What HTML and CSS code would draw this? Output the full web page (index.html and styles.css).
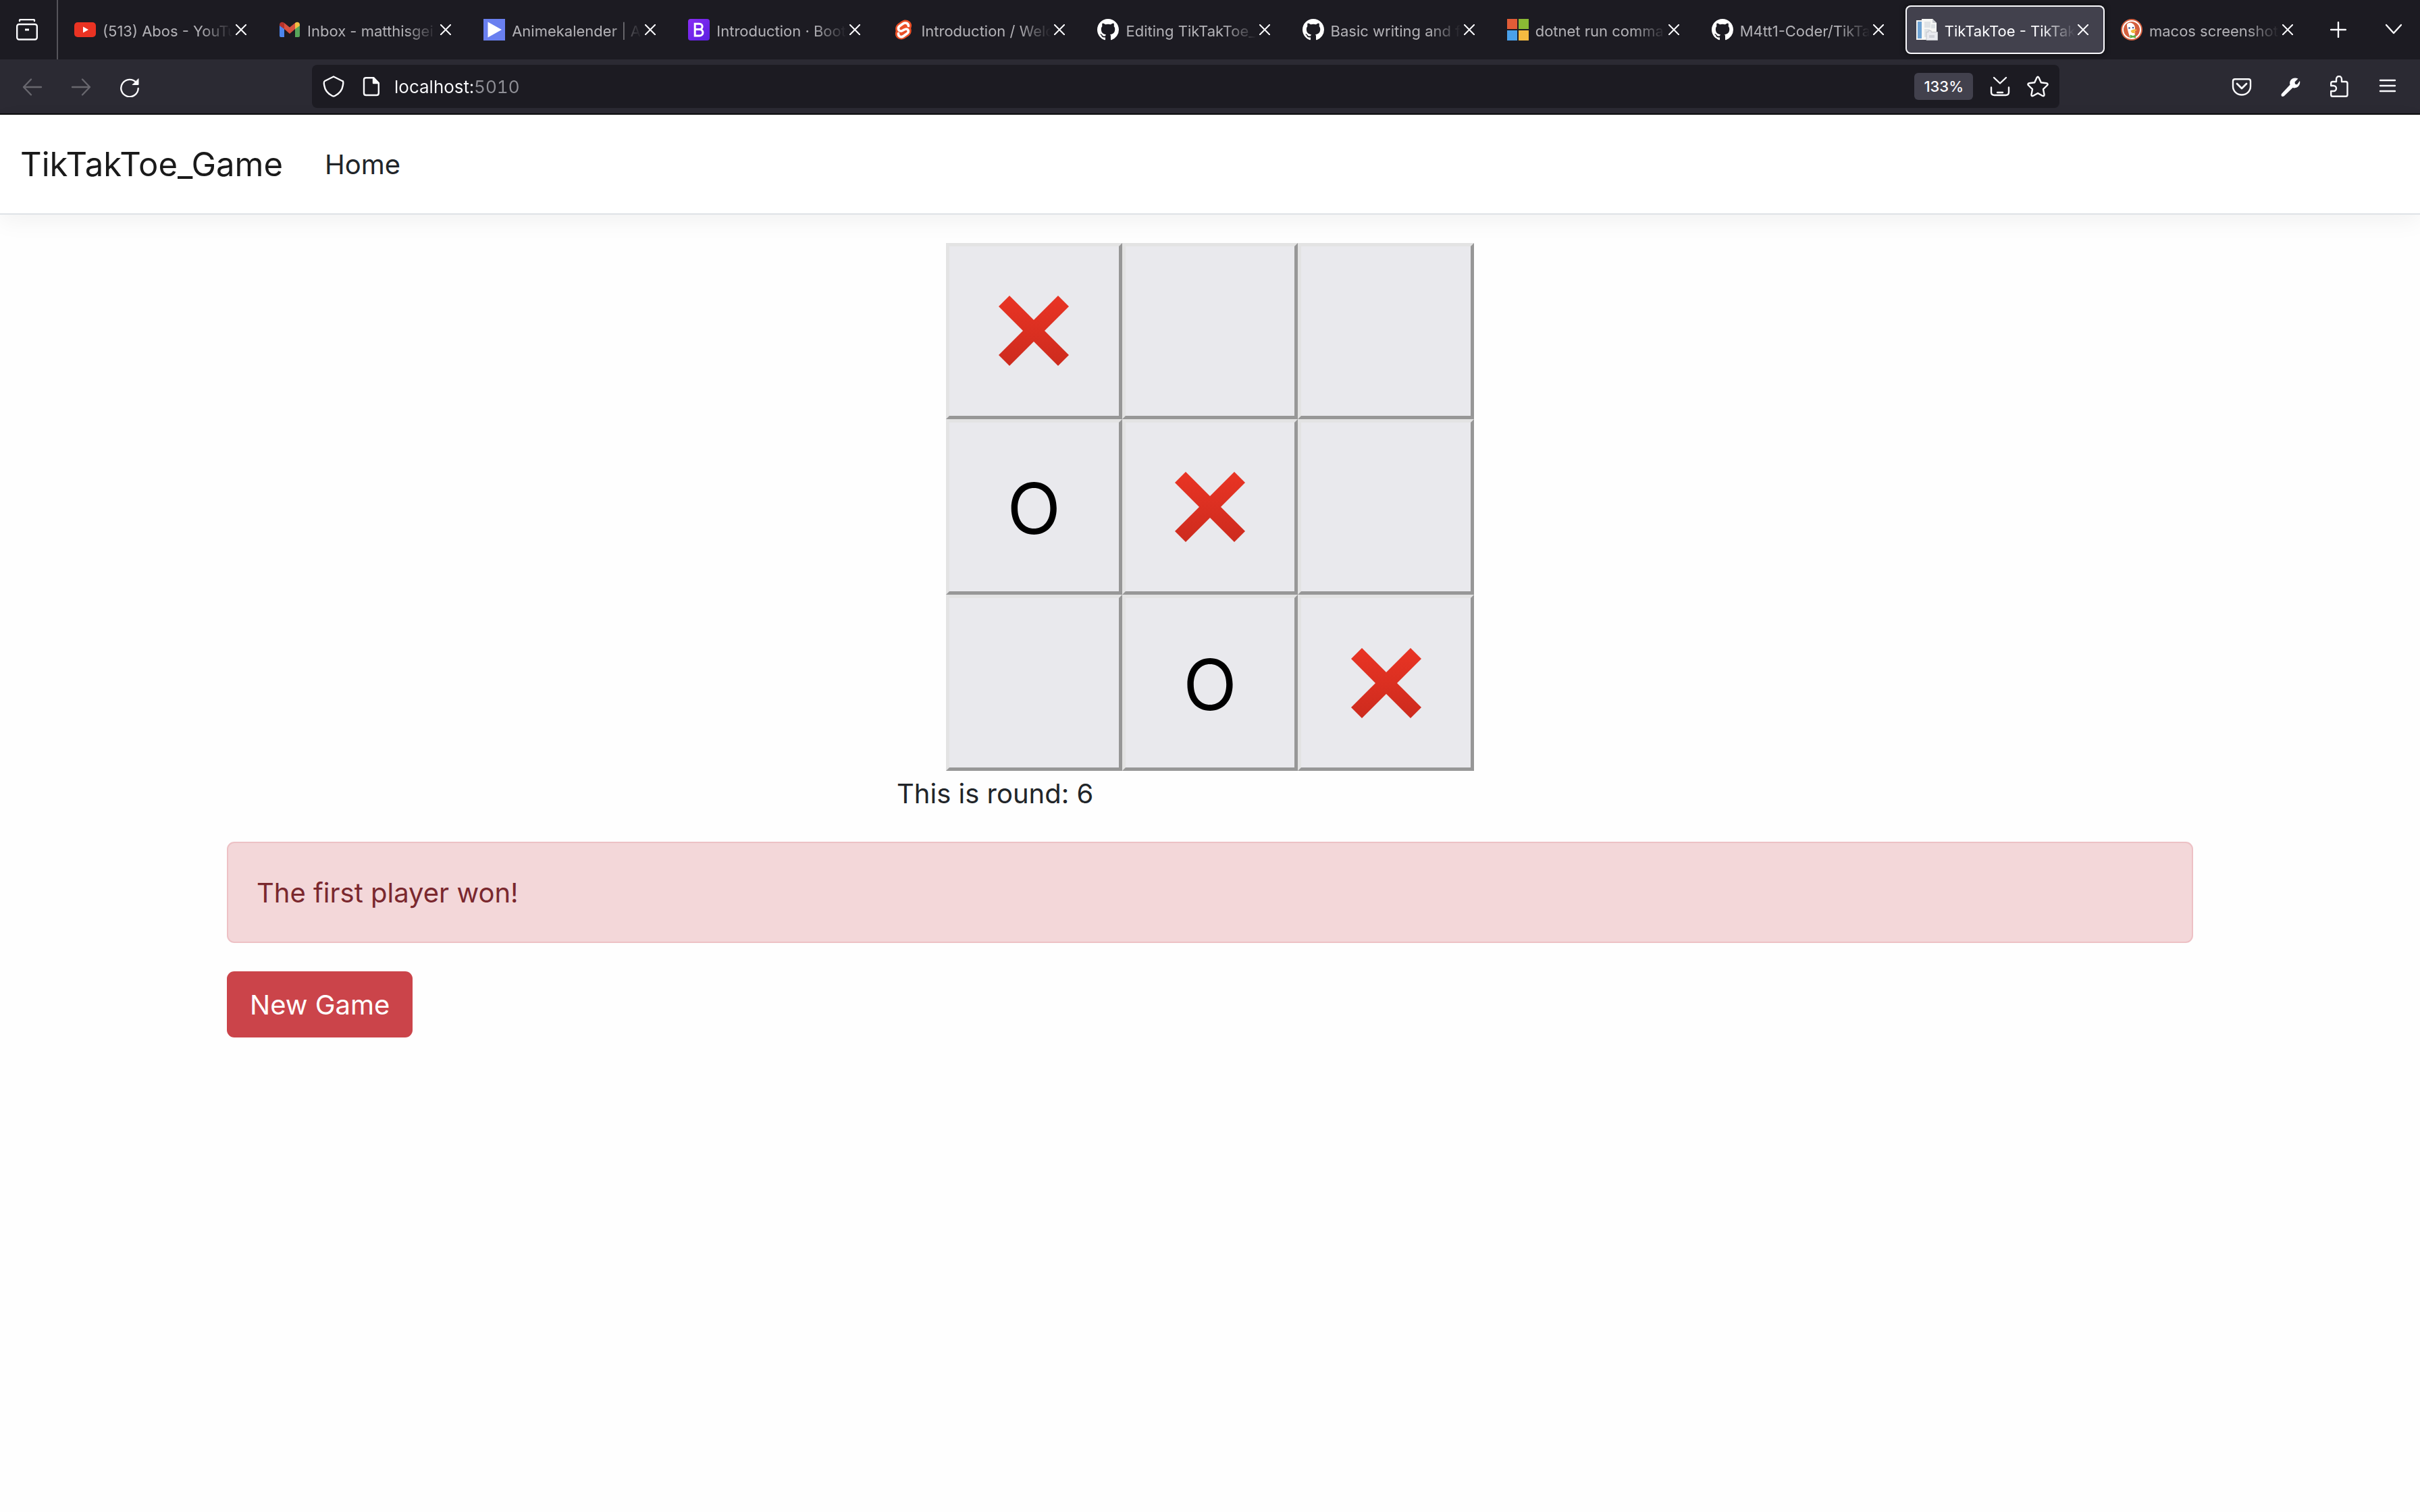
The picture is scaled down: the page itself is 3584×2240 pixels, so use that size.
FILE: index.html
```html
<!DOCTYPE html>
<html lang="en">
<head>
<meta charset="utf-8">
<meta name="viewport" content="width=device-width, initial-scale=1">
<title>TikTakToe - TikTakToe_Game</title>
<link rel="stylesheet" href="styles.css">
</head>
<body>
<svg class="defs" aria-hidden="true">
  <defs>
    <linearGradient id="red" x1="0" y1="0" x2="0" y2="1">
      <stop offset="0" stop-color="#e93424"/>
      <stop offset="1" stop-color="#cd2b1e"/>
    </linearGradient>
    <linearGradient id="purple" x1="0" y1="0" x2="1" y2="1">
      <stop offset="0" stop-color="#8a2cf5"/>
      <stop offset="1" stop-color="#5a1fe0"/>
    </linearGradient>
    <symbol id="close" viewBox="0 0 16 16">
      <path d="M.8.8l14.4 14.4M15.2.8L.8 15.2" fill="none" stroke="currentColor" stroke-width="2" stroke-linecap="round"/>
    </symbol>
    <symbol id="github" viewBox="0 0 16 16">
      <path fill="currentColor" d="M8 0C3.58 0 0 3.58 0 8c0 3.54 2.29 6.53 5.47 7.59.4.07.55-.17.55-.38 0-.19-.01-.82-.01-1.49-2.01.37-2.53-.49-2.69-.94-.09-.23-.48-.94-.82-1.13-.28-.15-.68-.52-.01-.53.63-.01 1.08.58 1.23.82.72 1.21 1.87.87 2.33.66.07-.52.28-.87.51-1.07-1.78-.2-3.64-.89-3.64-3.95 0-.87.31-1.59.82-2.15-.08-.2-.36-1.02.08-2.12 0 0 .67-.21 2.2.82.64-.18 1.32-.27 2-.27.68 0 1.36.09 2 .27 1.53-1.04 2.2-.82 2.2-.82.44 1.1.16 1.92.08 2.12.51.56.82 1.27.82 2.15 0 3.07-1.87 3.75-3.65 3.95.29.25.54.73.54 1.48 0 1.07-.01 1.93-.01 2.2 0 .21.15.46.55.38A8.013 8.013 0 0016 8c0-4.42-3.58-8-8-8z"/>
    </symbol>
    <symbol id="cross" viewBox="0 0 104 104">
      <path fill="url(#red)" d="M16 0L52 36 88 0l16 16-36 36 36 36-16 16-36-36-36 36L0 88l36-36L0 16z"/>
    </symbol>
  </defs>
</svg>

<header class="browser">
  <div class="tabstrip">
    <button class="tool view" aria-label="Recent browsing">
      <svg width="32" height="32" viewBox="0 0 32 32" fill="none" stroke="currentColor" stroke-width="2.4" stroke-linecap="round">
        <path d="M5 3V2q0-1 2-1h18q2 0 2 1v1"/><rect x="1.2" y="8" width="29.6" height="22.5" rx="3"/><path d="M13 16h6" stroke-width="3" stroke-linecap="butt"/>
      </svg>
    </button>
    <div class="tabs">
      <div class="tab">
        <svg class="favicon" viewBox="0 0 32 32"><rect y="5" width="32" height="22" rx="5" fill="#ea3323"/><path d="M13 11.500l8 4.500-8 4.500z" fill="#fff"/></svg>
        <span class="title">(513) Abos - YouTu</span>
        <button class="close" aria-label="Close tab"><svg><use href="#close"/></svg></button>
      </div>
      <div class="tab">
        <svg class="favicon" viewBox="0 0 32 32"><path fill="#4c86ee" d="M1 8l7 5v14H3q-2 0-2-2z"/><path fill="#57a55a" d="M31 8l-7 5v14h5q2 0 2-2z"/><path fill="#d85140" d="M8 6l8 6.500L24 6v9l-8 7-8-7z"/><path fill="#b5322b" d="M1 8.500C1 5 5 3.500 8 6v9l-7-5z"/><path fill="#f1bd42" d="M31 8.500C31 5 27 3.500 24 6v9l7-5z"/></svg>
        <span class="title">Inbox - matthisgei</span>
        <button class="close" aria-label="Close tab"><svg><use href="#close"/></svg></button>
      </div>
      <div class="tab">
        <svg class="favicon" viewBox="0 0 32 32"><path fill="#6a80f0" d="M0 0h32v32H0z"/><path fill="#fff" d="M6.500 4.500L27 16 6.500 27.500z"/></svg>
        <span class="title">Animekalender | An</span>
        <button class="close" aria-label="Close tab"><svg><use href="#close"/></svg></button>
      </div>
      <div class="tab">
        <svg class="favicon" viewBox="0 0 32 32"><rect width="32" height="32" rx="4" fill="url(#purple)"/><path d="M10.200 7.200h6.600c5.600 0 5.800 8 .4 8.400h-7 7c6.600.2 6.200 9.400-.4 9.400h-6.600z" fill="none" stroke="#fff" stroke-width="3"/></svg>
        <span class="title">Introduction · Boot</span>
        <button class="close" aria-label="Close tab"><svg><use href="#close"/></svg></button>
      </div>
      <div class="tab">
        <svg class="favicon" viewBox="0 0 32 32"><path fill="#eb5027" d="M13 3.500c6-4.500 14-1 15 5 .3 3-.5 4-.8 5.500 1 3.500.8 8-3.200 11l-6 4C12 32.500 5 29 4 23.500c-.4-3 .3-4 .6-5.500C3.500 14.500 4 10 8 7z"/><path fill="none" stroke="#fff" stroke-width="3.600" stroke-linecap="round" d="M23.500 10.500c-.5-4.500-5-5.500-8-3.500l-5 3.500c-3.500 2.500-2.500 8 2.500 7.500 3-.5 5-3.500 7.500-3 3.500.5 3.500 5 1 6.500l-5.500 4c-3.500 2.500-8 .5-7.500-4"/></svg>
        <span class="title">Introduction / Welc</span>
        <button class="close" aria-label="Close tab"><svg><use href="#close"/></svg></button>
      </div>
      <div class="tab">
        <svg class="favicon"><use href="#github"/></svg>
        <span class="title">Editing TikTakToe_</span>
        <button class="close" aria-label="Close tab"><svg><use href="#close"/></svg></button>
      </div>
      <div class="tab">
        <svg class="favicon"><use href="#github"/></svg>
        <span class="title">Basic writing and f</span>
        <button class="close" aria-label="Close tab"><svg><use href="#close"/></svg></button>
      </div>
      <div class="tab">
        <svg class="favicon" viewBox="0 0 32 32"><path fill="#e05c37" d="M0 0h15v15H0z"/><path fill="#8ab934" d="M17 0h15v15H17z"/><path fill="#4aa1ea" d="M0 17h15v15H0z"/><path fill="#f4ba41" d="M17 17h15v15H17z"/></svg>
        <span class="title">dotnet run comma</span>
        <button class="close" aria-label="Close tab"><svg><use href="#close"/></svg></button>
      </div>
      <div class="tab">
        <svg class="favicon"><use href="#github"/></svg>
        <span class="title">M4tt1-Coder/TikTa</span>
        <button class="close" aria-label="Close tab"><svg><use href="#close"/></svg></button>
      </div>
      <div class="tab active">
        <svg class="favicon" viewBox="0 0 32 32"><path fill="#f4f4f2" d="M0 2h10v29H0z"/><path fill="#6ea3d4" d="M2 4h6v25H2z"/><path fill="#f7f7f5" d="M8 0h16l6 6v25H8z"/><path fill="#dfe3e6" d="M12 4h9v9h-9zM12 15h8v12h-8zM22 8h6v6h-6z"/><path fill="#c9ccd0" d="M24 0v6h6z"/><path fill="#e9eaef" stroke="#c3c5ca" d="M15 19.500h3v-2h4v2h9.500v12H15z"/><path fill="#cfd1d8" d="M19 24h8v4h-8z"/></svg>
        <span class="title">TikTakToe - TikTak</span>
        <button class="close" aria-label="Close tab"><svg><use href="#close"/></svg></button>
      </div>
      <div class="tab">
        <svg class="favicon" viewBox="0 0 32 32"><circle cx="16" cy="16" r="16" fill="#d4603f"/><circle cx="16" cy="16" r="13" fill="none" stroke="#fff" stroke-width="2"/><path fill="#fff" d="M9 8c3-4 10-2 11.500 3 1 4-.5 9 .5 16.500-3 1.500-5.500 1-7.500.500C12 22 9 16 9 8z"/><path fill="#f3bb3c" d="M14.500 17.500c3-2.500 7-2.500 9.500-1.500-1.500 2-4 2-4 3s2 1 3 .8c-3 2.200-8 1.700-8.500-2.300z"/><path fill="#5fae45" d="M13.500 23.500l4.500 1.500 4-1.500v5l-4-1-4.500 1z"/><circle cx="12.500" cy="13.500" r="1.300" fill="#2d4f8e"/><circle cx="18" cy="13" r="1.200" fill="#2d4f8e"/></svg>
        <span class="title">macos screenshot</span>
        <button class="close" aria-label="Close tab"><svg><use href="#close"/></svg></button>
      </div>
    </div>
    <button class="tool new" aria-label="New tab"><svg width="24" height="24" viewBox="0 0 24 24" fill="none" stroke="currentColor" stroke-width="2.400" stroke-linecap="round"><path d="M12 1v22M1 12h22"/></svg></button>
    <button class="tool list" aria-label="List all tabs"><svg width="24" height="24" viewBox="0 0 24 24" fill="none" stroke="currentColor" stroke-width="2.400" stroke-linecap="round" stroke-linejoin="round"><path d="M1 5l11 12L23 5"/></svg></button>
  </div>

  <div class="toolbar">
    <div class="group nav-buttons">
      <button class="icon dim" aria-label="Back"><svg width="32" height="32" viewBox="0 0 32 32" fill="none" stroke="currentColor" stroke-width="2.400" stroke-linecap="round" stroke-linejoin="round"><path d="M14 5.500L3 17l11 11.500M3 17h26"/></svg></button>
      <button class="icon dim" aria-label="Forward"><svg width="32" height="32" viewBox="0 0 32 32" fill="none" stroke="currentColor" stroke-width="2.400" stroke-linecap="round" stroke-linejoin="round"><path d="M18 5.500L29 17 18 28.500M3 17h26"/></svg></button>
      <button class="icon" aria-label="Reload"><svg width="32" height="32" viewBox="0 0 32 32" fill="none" stroke="currentColor" stroke-width="2.400" stroke-linecap="round"><path d="M25.800 10.500A12.700 12.700 0 1 0 28.700 19"/><path d="M29 5v8.500h-8.500z" fill="currentColor" stroke-width="1"/></svg></button>
    </div>
    <div class="urlbar">
      <svg width="32" height="32" viewBox="0 0 32 32" fill="none" stroke="currentColor" stroke-width="2.400" stroke-linejoin="round"><path d="M16 1.500L29 8c2 0 1.200 4 .8 6.500-1 7-6 12.500-11.800 15.500q-2 1-4 0C8 27 3.200 21.500 2.200 14.500 1.800 12 1 9 3 8z"/></svg>
      <svg width="32" height="32" viewBox="0 0 32 32" fill="none" stroke="currentColor" stroke-width="2.400" stroke-linejoin="round"><path d="M8 3.200h11.500L26.800 11v15q0 3-3 3H8q-3 0-3-3V6q0-2.800 3-2.800z"/><path fill="currentColor" d="M19 3.500V11h7.500z"/></svg>
      <input class="address" type="text" aria-label="Address" value="localhost:5010">
      <button class="zoom">133%</button>
      <button class="icon" aria-label="Save page"><svg width="32" height="32" viewBox="0 0 32 32" fill="none" stroke="currentColor" stroke-width="2.400" stroke-linecap="round" stroke-linejoin="round"><path d="M7 3l9 8.500L25 3M3 17.500v7q0 4.500 4.500 4.500h17q4.500 0 4.500-4.500v-7M12 25h8"/></svg></button>
      <button class="icon" aria-label="Bookmark"><svg width="32" height="32" viewBox="0 0 32 32" fill="none" stroke="currentColor" stroke-width="2.400" stroke-linejoin="round"><path d="M14.500 3q1.500-2.500 3 0l3.300 7.300 8 1c2.200.3 2.200 2 1 3.200L24 20.200l1.500 7.800c.3 2-1 2.700-2.500 2L16 26l-7 4c-1.500.7-2.800 0-2.500-2L8 20.200l-5.800-5.700c-1.200-1.200-1.200-2.900 1-3.200l8-1z"/></svg></button>
    </div>
    <div class="group extras">
      <button class="icon" aria-label="Pocket"><svg width="32" height="32" viewBox="0 0 32 32" fill="none" stroke="currentColor" stroke-width="2.400" stroke-linecap="round" stroke-linejoin="round"><path d="M6 5.200h20q3 0 3 3V16a13 12.500 0 0 1-26 0V8.200q0-3 3-3z"/><path d="M9 12l7 7 7-7" stroke-width="2.800"/></svg></button>
      <button class="icon" aria-label="Developer tools"><svg width="32" height="32" viewBox="0 0 32 32"><path fill="currentColor" d="M27.500 4.500l-5 5 .5 3 3 .8 4-5.500c1.500 6-3.500 12-10.500 10.300L6.500 30.500c-3 1.500-5-.8-3.500-3.500L15.500 13.500C13.500 7 20 1 27.500 4.500z"/></svg></button>
      <button class="icon" aria-label="Extensions"><svg width="32" height="32" viewBox="0 0 32 32" fill="none" stroke="currentColor" stroke-width="2.400" stroke-linejoin="round"><path d="M4.200 15V11.500q0-2.500 2.500-2.500H12V5.500a4 4.500 0 0 1 8 0V9h6q2.500 0 2.500 2.500v17q0 2.300-2.500 2.300H6.500q-2.300 0-2.300-2.300V23H8a4 4 0 0 0 0-8z"/></svg></button>
      <button class="icon" aria-label="Menu"><svg width="32" height="32" viewBox="0 0 32 32" fill="none" stroke="currentColor" stroke-width="2.400" stroke-linecap="round"><path d="M5 7h22M5 15h22M5 23h22"/></svg></button>
    </div>
  </div>
</header>

<nav class="navbar">
  <a class="brand" href="#">TikTakToe_Game</a>
  <a class="link" href="#">Home</a>
</nav>

<main class="container">
  <div class="game">
    <div class="board">
      <button class="cell" aria-label="X"><svg class="mark"><use href="#cross"/></svg></button>
      <button class="cell" aria-label="Empty"></button>
      <button class="cell" aria-label="Empty"></button>
      <button class="cell"><span class="letter">O</span></button>
      <button class="cell" aria-label="X"><svg class="mark"><use href="#cross"/></svg></button>
      <button class="cell" aria-label="Empty"></button>
      <button class="cell" aria-label="Empty"></button>
      <button class="cell"><span class="letter">O</span></button>
      <button class="cell" aria-label="X"><svg class="mark"><use href="#cross"/></svg></button>
    </div>
    <p class="round">This is round: 6</p>
  </div>
  <div class="alert" role="alert">The first player won!</div>
  <button class="new-game">New Game</button>
</main>
</body>
</html>
```
FILE: styles.css
```css
* {
  box-sizing: border-box;
}

body {
  margin: 0;
  background: #fefefe;
  color: #212529;
  font-family: Inter, "Liberation Sans", sans-serif;
  font-size: 40px;
  line-height: 64px;
}

button,
input {
  margin: 0;
  padding: 0;
  border: 0;
  background: none;
  color: inherit;
  font: inherit;
}

svg {
  display: block;
  flex: none;
}

.defs {
  position: absolute;
  width: 0;
  height: 0;
}

/* Browser window */

.browser {
  border-bottom: 2px solid #0c0c0d;
  background: #2b2a33;
  color: #fbfbfe;
  font-size: 22px;
  line-height: 28px;
}

.tabstrip {
  display: flex;
  height: 88px;
  background: #1c1b22;
}

.tool {
  display: flex;
  flex: none;
  align-items: center;
  justify-content: center;
}

.view {
  width: 86px;
  padding-right: 4px;
  border-right: 2px solid #55545a;
}

.new {
  width: 86px;
}

.list {
  width: 78px;
}

.tabs {
  display: flex;
  flex: 1;
  gap: 8px;
  min-width: 0;
  padding: 8px 0 8px 8px;
}

.tab {
  display: flex;
  flex: 1;
  align-items: center;
  min-width: 0;
  padding: 0 24px 0 16px;
  border-radius: 8px;
  color: #b3b2b7;
}

.tab.active {
  background: #42414d;
  box-shadow: inset 0 0 0 2px #fbfbfe, 0 0 8px #0c0c0d;
  color: #fbfbfe;
}

.favicon {
  width: 32px;
  height: 32px;
  margin-right: 10px;
  color: #fff;
}

.title {
  flex: 1;
  min-width: 0;
  padding-top: 4px;
  overflow: hidden;
  white-space: nowrap;
  mask-image: linear-gradient(to left, transparent, #000 48px);
}

.close {
  flex: none;
  padding-left: 4px;
  color: #fbfbfe;
}

.close svg {
  width: 16px;
  height: 16px;
}

.toolbar {
  display: flex;
  align-items: center;
  height: 80px;
  padding: 0 32px;
}

.group {
  display: flex;
}

.icon {
  flex: none;
}

.dim {
  color: #68676e;
}

.nav-buttons {
  gap: 40px;
  padding-right: 254px;
}

.extras {
  gap: 40px;
  padding-left: 254px;
}

.urlbar {
  display: flex;
  flex: 1;
  align-items: center;
  height: 64px;
  min-width: 0;
  padding: 0 16px;
  border-radius: 8px;
  background: #1c1b22;
}

.urlbar svg + svg {
  margin-left: 24px;
}

.urlbar .icon {
  margin-left: 24px;
}

.address {
  flex: 1;
  min-width: 0;
  margin-left: 18px;
  padding-top: 2px;
  background: linear-gradient(to right, #fbfbfe 117px, #8f8f96 117px);
  background-clip: text;
  font-size: 26px;
  font-variant-numeric: tabular-nums;
  line-height: 32px;
  -webkit-text-fill-color: transparent;
}

.zoom {
  height: 40px;
  padding: 0 14px;
  border-radius: 6px;
  background: #42414d;
  font-weight: 500;
}

/* Page */

.navbar {
  display: flex;
  align-items: center;
  gap: 62px;
  height: 148px;
  padding: 2px 30px 0;
  border-bottom: 2px solid #dee2e6;
  background: #fff;
  box-shadow: 0 10px 32px rgba(0, 0, 0, 0.05);
}

.brand,
.link {
  color: #212529;
  text-decoration: none;
}

.brand {
  color: #1a1a1a;
  font-size: 49px;
}

.container {
  width: 100%;
  max-width: 2912px;
  margin: 0 auto;
  padding-top: 42px;
}

.game {
  max-width: 928px;
  margin: 0 auto 39px;
}

.board {
  display: grid;
  grid-template-columns: repeat(3, 1fr);
  width: 782px;
  margin: 0 auto;
}

.cell {
  display: flex;
  align-items: center;
  justify-content: center;
  aspect-ratio: 1;
  border: 5px solid;
  border-color: #e3e3e3 #979797 #979797 #e3e3e3;
  background: #e9e9ed;
  color: #000;
  font-size: 104px;
}

.letter {
  padding-top: 4px;
}

.mark {
  width: 104px;
  height: 104px;
}

.round {
  margin: 0;
  padding-top: 2px;
}

.alert {
  margin-bottom: 42px;
  padding: 42px 42px 40px;
  border: 2px solid #edc1c5;
  border-radius: 11px;
  background: #f3d7d9;
  color: #7a282e;
}

.new-game {
  padding: 18px 34px 16px;
  border-radius: 11px;
  background: #cb444a;
  color: #fff;
}
```
